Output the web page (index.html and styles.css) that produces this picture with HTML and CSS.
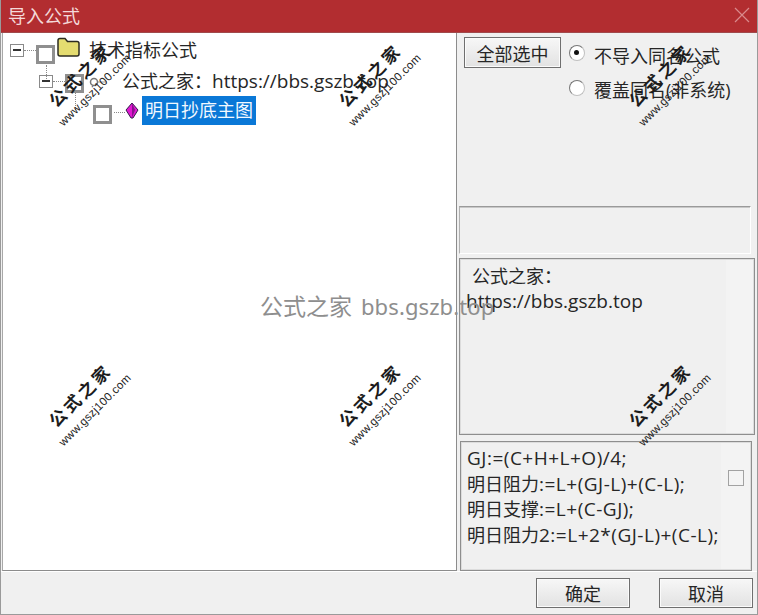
FILE: index.html
```html
<!DOCTYPE html>
<html lang="zh">
<head>
<meta charset="utf-8">
<title>导入公式</title>
<link rel="stylesheet" href="styles.css">
</head>
<body>
<div class="window">
  <header class="titlebar">
    <span class="title">导入公式</span>
    <svg class="close" width="16" height="16" viewBox="0 0 16 16"><path d="M1 1L15 15M15 1L1 15" stroke="#d98a8c" stroke-width="1.2" fill="none"/></svg>
  </header>
  <main class="main">
    <section class="tree">
      <div class="node node-1">
        <span class="expander"></span><span class="dots"></span><span class="check"></span>
        <svg class="folder" width="23" height="20" viewBox="0 0 23 20"><path d="M1 17V3.5Q1 1.5 3 1.5H8L10.500 4.500H20Q22 4.500 22 6.500V17Q22 19 20 19H3Q1 19 1 17Z" fill="#e4dc70" stroke="#2c2c20" stroke-width="1.500"/></svg>
        <span class="label label-1">技术指标公式</span>
      </div>
      <div class="node node-2">
        <span class="expander"></span><span class="dots"></span><span class="check"></span>
        <svg class="gear" width="20" height="14" viewBox="0 0 20 14"><circle cx="6" cy="7" r="3.500" fill="none" stroke="#777" stroke-width="1.500"/><path d="M10 7H19" stroke="#999" stroke-width="1"/></svg>
        <span class="label label-2">公式之家：<span class="lat">https://bbs.gszb.top</span></span>
      </div>
      <div class="node node-3">
        <span class="dots dots-long"></span><span class="check"></span>
        <span class="dots dots-short"></span>
        <svg class="gem" width="14" height="17" viewBox="0 0 14 17"><path d="M7 1L13 8L8 16H6L1 8Z" fill="#e018d0" stroke="#30204a" stroke-width="1"/><path d="M7 1L10 8L7 16Z" fill="#8a1090"/></svg>
        <span class="label label-3">明日抄底主图</span>
      </div>
      <span class="vline vline-1"></span>
      <span class="vline vline-2"></span>
    </section>
    <aside class="side">
      <div class="options">
        <button class="btn btn-all" type="button">全部选中</button>
        <div class="radios">
          <div class="radio-row"><span class="radio radio-on"></span><span class="radio-text">不导入同名公式</span></div>
          <div class="radio-row"><span class="radio"></span><span class="radio-text">覆盖同名(非系统)</span></div>
        </div>
      </div>
      <div class="box-empty"></div>
      <div class="box-desc">
        <div class="desc-1">公式之家：</div>
        <div class="desc-2"><span class="lat">https://bbs.gszb.top</span></div>
      </div>
      <div class="box-code">
        <div class="code">
          <div><span class="lat">GJ:=(C+H+L+O)/4;</span></div>
          <div>明日阻力<span class="lat">:=L+(GJ-L)+(C-L);</span></div>
          <div>明日支撑<span class="lat">:=L+(C-GJ);</span></div>
          <div>明日阻力<span class="lat">2:=L+2*(GJ-L)+(C-L);</span></div>
        </div>
        <span class="code-check"></span>
      </div>
    </aside>
  </main>
  <footer class="footer">
    <button class="btn btn-foot" type="button">确定</button>
    <button class="btn btn-foot" type="button">取消</button>
  </footer>

  <div class="center-mark">公式之家 <span class="center-lat">bbs.gszb.top</span></div>
  <div class="wm wm-a wm-x1"><b>公式之家</b><i>www.gszj100.com</i></div>
  <div class="wm wm-a wm-x2"><b>公式之家</b><i>www.gszj100.com</i></div>
  <div class="wm wm-a wm-x3"><b>公式之家</b><i>www.gszj100.com</i></div>
  <div class="wm wm-b wm-x1"><b>公式之家</b><i>www.gszj100.com</i></div>
  <div class="wm wm-b wm-x2"><b>公式之家</b><i>www.gszj100.com</i></div>
  <div class="wm wm-b wm-x3"><b>公式之家</b><i>www.gszj100.com</i></div>
</div>
</body>
</html>
```
FILE: styles.css
```css
* { box-sizing: border-box; }
html, body { margin: 0; padding: 0; }
body {
  width: 758px;
  height: 615px;
  overflow: hidden;
  font-family: "Open Sans", "Noto Sans CJK SC", sans-serif;
  font-size: 18px;
  color: #262626;
  background: #f0f0f0;
}
.lat { font-size: 19px; }
.window {
  position: relative;
  width: 758px;
  height: 615px;
  display: flex;
  flex-direction: column;
  background: #f0f0f0;
  border-left: 1px solid #9a9a9a;
  border-right: 1px solid #9a9a9a;
  border-bottom: 1px solid #9a9a9a;
  overflow: hidden;
}
.titlebar {
  height: 33px;
  flex: none;
  margin: 0 -1px;
  background: #b22d30;
  border-bottom: 1px solid #a04a4c;
  display: flex;
  align-items: center;
  justify-content: space-between;
  padding: 0 8px 2px 8px;
}
.title {
  font-family: "Noto Sans CJK SC", sans-serif;
  color: #f4d9d9;
  font-size: 18px;
  line-height: 24px;
}
.main {
  flex: none;
  height: 538px;
  display: flex;
}
.tree {
  position: relative;
  width: 455px;
  margin-left: 1px;
  flex: none;
  background: #fff;
  border-left: 1px solid #a8a8a8;
  border-right: 1px solid #8c8c8c;
  border-bottom: 1px solid #8c8c8c;
  padding: 3px 0 0 7px;
}
.node { display: flex; align-items: center; height: 31px; }
.node-1 { margin-top: -1px; }
.node-2 { padding-left: 29px; }
.node-3 { padding-left: 58px; height: 30px; }
.expander {
  position: relative;
  width: 14px;
  height: 13px;
  flex: none;
  border: 1.500px solid #8a8a8a;
  background: #fff;
}
.expander::after {
  content: "";
  position: absolute;
  left: 2px;
  right: 2px;
  top: 4px;
  height: 2px;
  background: #333;
}
.dots { width: 12px; height: 0; flex: none; border-top: 1px dotted #888; }
.dots-long { width: 0; }
.dots-short { width: 11px; margin-left: 2px; }
.check {
  width: 19px;
  height: 19px;
  flex: none;
  border: 3px solid #8f8f8f;
  background: #fff;
}
.node-1 .check { margin-top: 8px; }
.node-2 .check { margin-top: 4px; }
.node-3 .check { margin-top: 5px; margin-left: 25px; }
.folder { margin: -8px 0 0 2px; flex: none; }
.gear { margin: 0 0 0 4px; flex: none; }
.gem { margin-left: 0; flex: none; margin-top: -3px; }
.label { white-space: nowrap; line-height: 28px; }
.label-1 { margin-left: 9px; margin-top: -2px; }
.label-2 { margin-left: 14px; margin-top: -1px; }
.label-3 {
  margin-left: 3px;
  padding: 0 3px;
  background: #0a78d7;
  color: #f2f8ff;
  margin-top: -3px;
  line-height: 29px;
}
.vline { position: absolute; width: 0; border-left: 1px dotted #888; }
.vline-1 { left: 43px; top: 32px; height: 14px; }
.vline-2 { left: 72px; top: 60px; height: 17px; }
.side {
  flex: 1;
  min-width: 0;
  display: flex;
  flex-direction: column;
  align-items: flex-start;
}
.options { display: flex; height: 174px; padding: 4px 0 0 7px; }
.btn {
  font-family: "Noto Sans CJK SC", sans-serif;
  font-size: 18px;
  line-height: 24px;
  color: #262626;
  border: 1px solid #6f6f6f;
  border-radius: 0;
  padding: 0;
  background: linear-gradient(#f7f7f7, #e2e2e2);
  box-shadow: inset 0 0 0 1px #fbfbfb;
}
.btn-all { width: 97px; height: 31px; flex: none; }
.radios { margin-left: 8px; margin-top: -2px; }
.radio-row { display: flex; align-items: center; height: 35px; gap: 9px; white-space: nowrap; }
.radio-text { margin-top: 5px; }
.radio-row + .radio-row .radio-text { margin-top: 2px; }
.radio {
  position: relative;
  width: 16px;
  height: 16px;
  flex: none;
  border-radius: 50%;
  background: #fff;
  border: 1.500px solid #c0c0c0;
  border-left-color: #777;
  border-top-color: #777;
}
.radio-on::after {
  content: "";
  position: absolute;
  left: 4px;
  top: 4px;
  width: 5px;
  height: 5px;
  border-radius: 50%;
  background: #111;
}
.box-empty {
  width: 292px;
  height: 48px;
  margin-left: 2px;
  border: 1px solid #fff;
  border-top: 1px solid #9a9a9a;
  border-left: 1px solid #b0b0b0;
  box-shadow: inset 0 1px 0 #c8c8c8;
  flex: none;
}
.box-desc {
  width: 296px;
  height: 177px;
  margin: 4px 0 0 2px;
  border: 1px solid #8e8e8e;
  box-shadow: inset 0 0 0 1px #dcdcdc;
  background: linear-gradient(90deg, #f0f0f0 266px, #f3f3f3 266px);
  padding: 5px 0 0 6px;
  flex: none;
  line-height: 25px;
}
.desc-1 { padding-left: 6px; }
.box-code {
  position: relative;
  width: 292px;
  height: 130px;
  margin: 6px 0 0 3px;
  border: 1px solid #8e8e8e;
  box-shadow: inset 0 0 0 1px #dcdcdc;
  background: linear-gradient(90deg, #f0f0f0 260px, #f3f3f3 260px);
  padding: 4px 0 0 6px;
  flex: none;
  display: flex;
}
.code { line-height: 25.500px; white-space: nowrap; }
.code .lat { letter-spacing: 0.500px; }
.code-check {
  position: absolute;
  left: 267px;
  top: 28px;
  width: 16px;
  height: 16px;
  border: 1px solid #a2a2a2;
  background: #f4f4f4;
}
.footer {
  flex: 1;
  display: flex;
  justify-content: flex-end;
  gap: 29px;
  padding: 6px 4px 0 0;
  border-top: 1px solid #fff;
}
.btn-foot { width: 94px; height: 30px; }
.center-mark {
  position: absolute;
  left: 259px;
  top: 291px;
  font-family: "Noto Sans", "Noto Sans CJK SC", sans-serif;
  font-size: 23px;
  line-height: 30px;
  color: #8e8e8e;
  white-space: nowrap;
}
.center-lat { font-size: 22px; margin-left: 3px; letter-spacing: 0.100px; }
.wm {
  position: absolute;
  width: 110px;
  height: 44px;
  transform: rotate(-45deg);
  display: flex;
  flex-direction: column;
  align-items: center;
  color: #1c1c1c;
}
.wm b {
  font-family: "Noto Sans CJK SC", sans-serif;
  font-size: 17px;
  font-weight: 700;
  line-height: 24px;
  letter-spacing: 3px;
  white-space: nowrap;
}
.wm i {
  font-family: "Liberation Sans", sans-serif;
  font-size: 11.500px;
  font-style: normal;
  line-height: 14px;
  letter-spacing: 0.300px;
  white-space: nowrap;
  margin-top: 2px;
}
.wm-a { top: 60px; }
.wm-b { top: 380px; }
.wm-x1 { left: 31px; }
.wm-x2 { left: 321px; }
.wm-x3 { left: 611px; }
```
